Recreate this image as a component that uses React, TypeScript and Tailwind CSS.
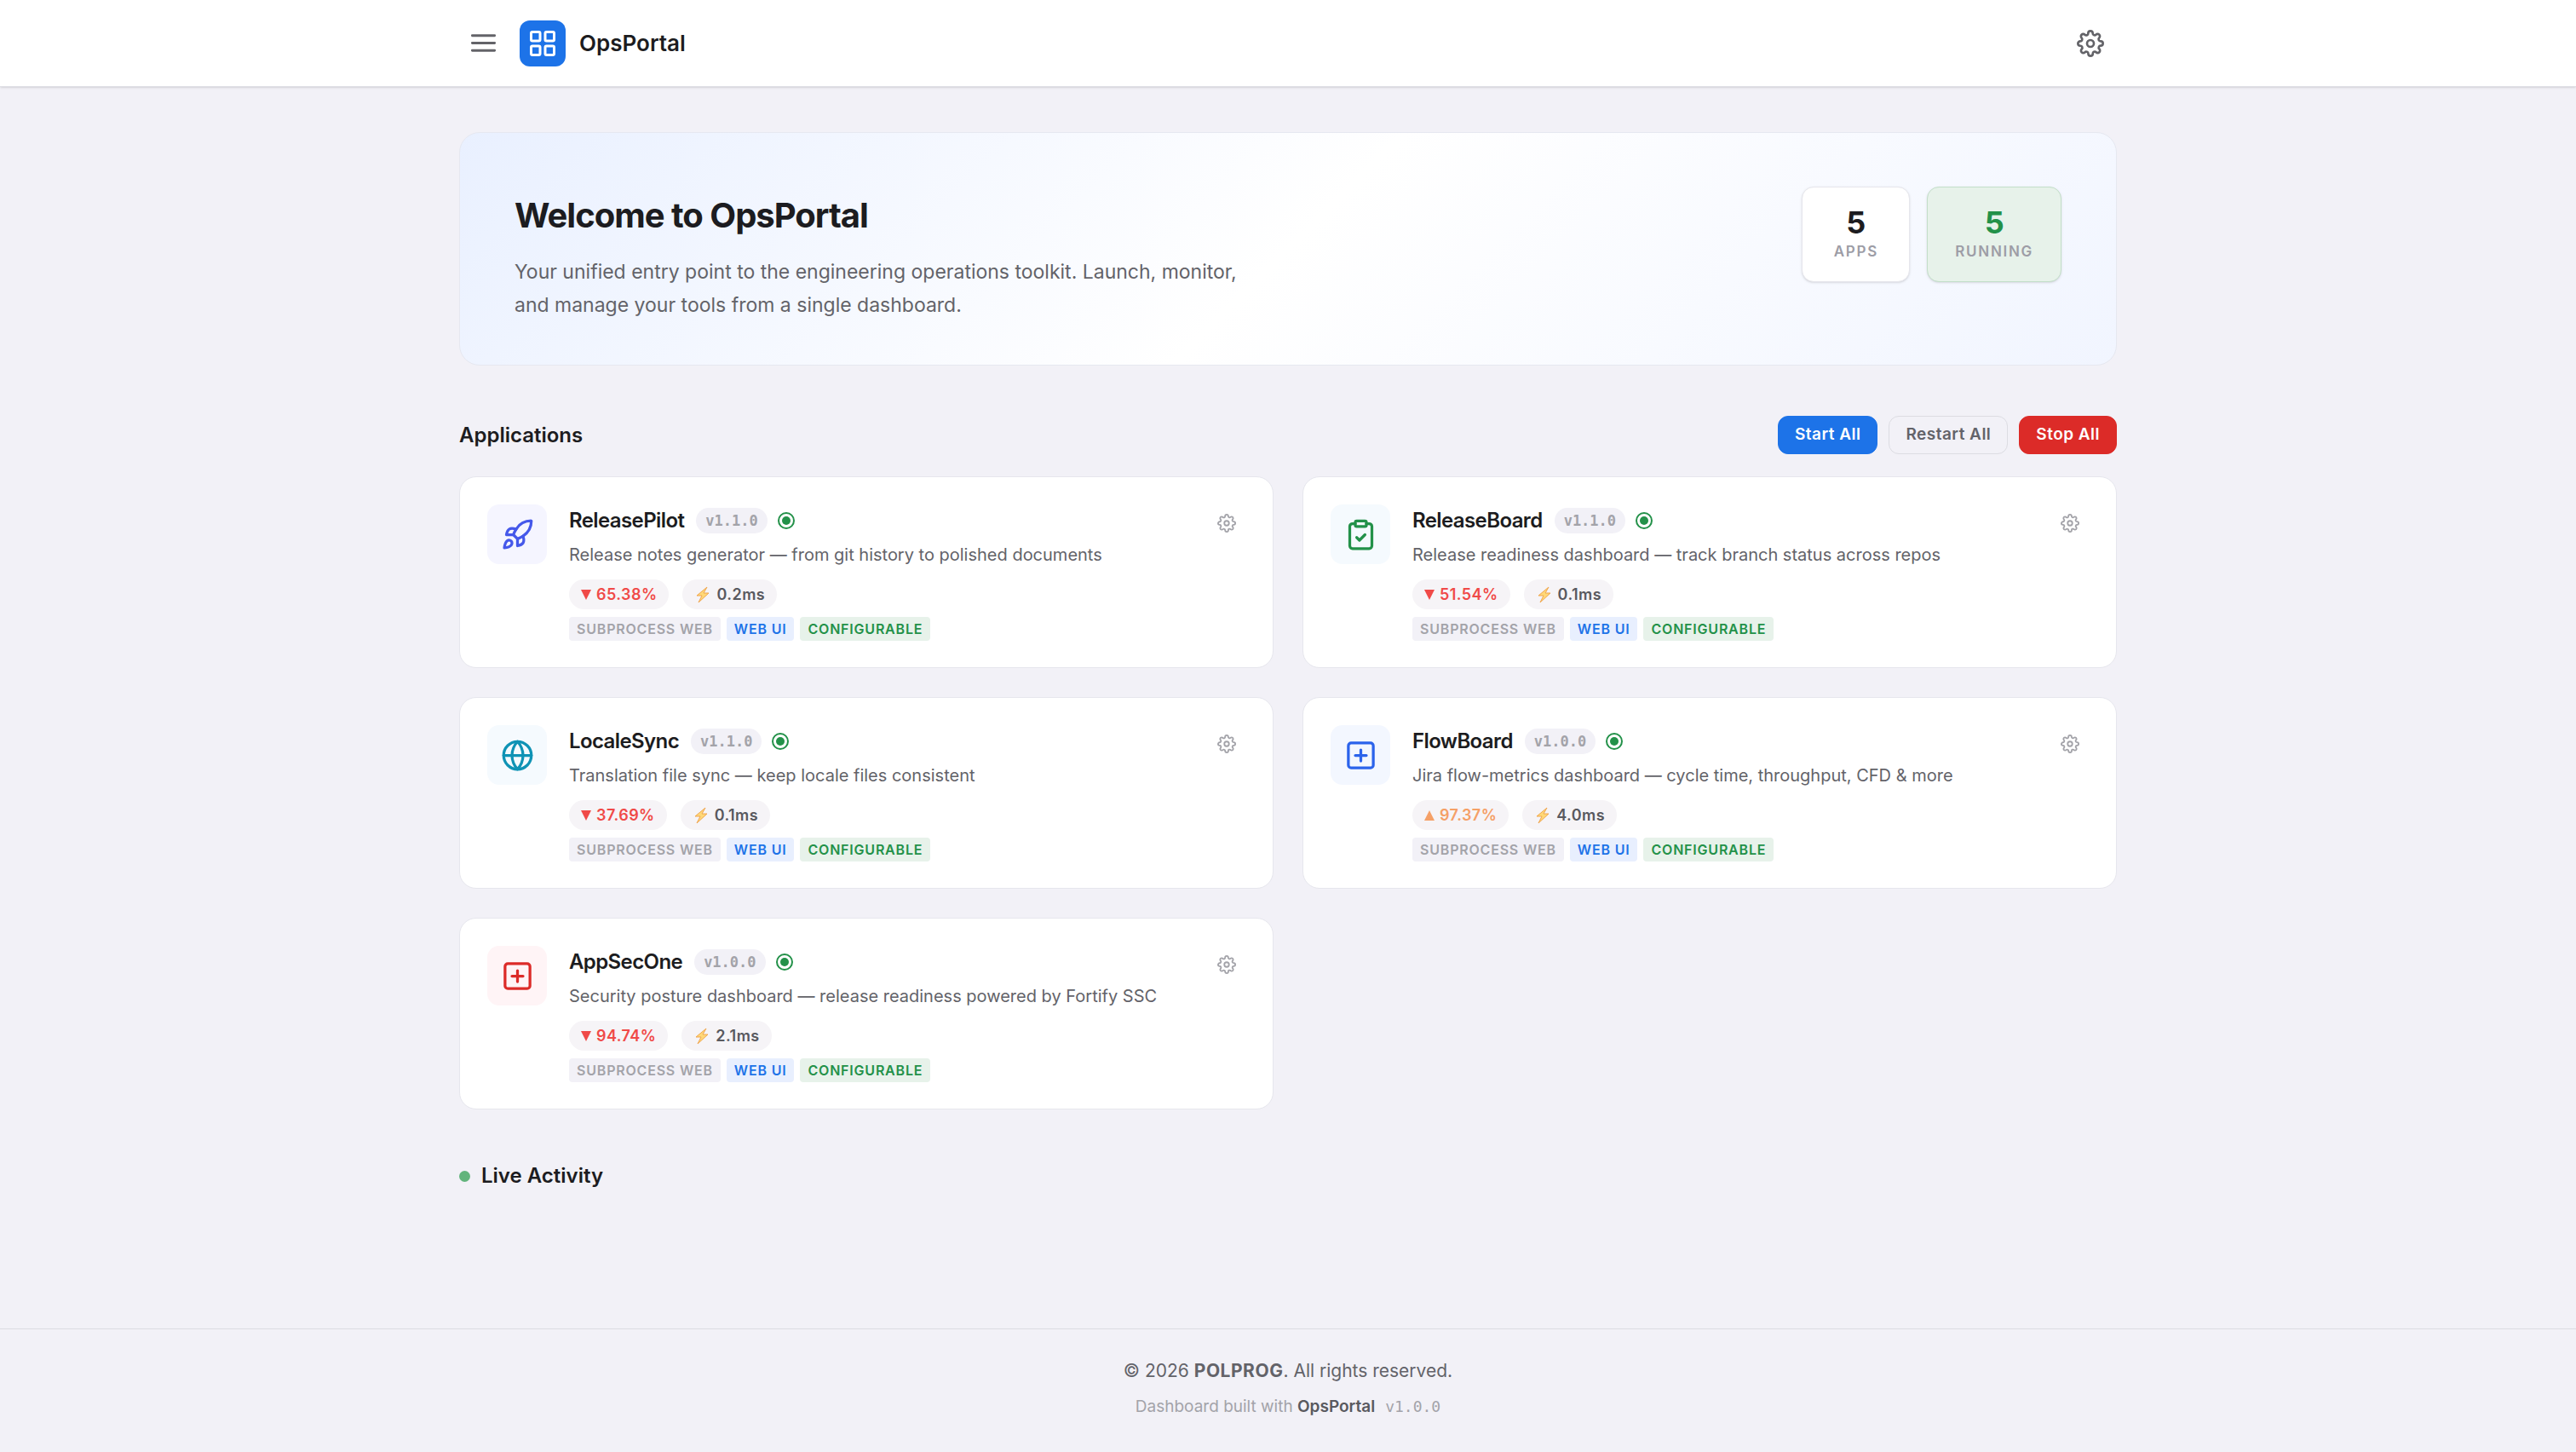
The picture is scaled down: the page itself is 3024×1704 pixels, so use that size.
import clsx from "clsx";
import type { ReactNode } from "react";

type AppInfo = {
  name: string;
  version: string;
  description: string;
  uptime: string;
  trend: "up" | "down";
  latency: string;
  icon: ReactNode;
  tile: string;
};

const plusSquare = (
  <>
    <rect x="3" y="3" width="18" height="18" rx="2" />
    <path d="M12 8v8M8 12h8" />
  </>
);

const apps: AppInfo[] = [
  {
    name: "ReleasePilot",
    version: "v1.1.0",
    description: "Release notes generator — from git history to polished documents",
    uptime: "65.38%",
    trend: "down",
    latency: "0.2ms",
    tile: "bg-[#f5f5ff] text-[#4558ea]",
    icon: (
      <>
        <path d="M4.5 16.5c-1.5 1.26-2 5-2 5s3.74-.5 5-2c.71-.84.7-2.13-.09-2.91a2.18 2.18 0 0 0-2.91-.09z" />
        <path d="m12 15-3-3a22 22 0 0 1 2-3.95A12.88 12.88 0 0 1 22 2c0 2.72-.78 7.5-6 11a22.35 22.35 0 0 1-4 2z" />
        <path d="M9 12H4s.55-3.03 2-4c1.62-1.08 5 0 5 0" />
        <path d="M12 15v5s3.03-.55 4-2c1.08-1.62 0-5 0-5" />
      </>
    ),
  },
  {
    name: "ReleaseBoard",
    version: "v1.1.0",
    description: "Release readiness dashboard — track branch status across repos",
    uptime: "51.54%",
    trend: "down",
    latency: "0.1ms",
    tile: "bg-[#f5fafe] text-[#239149]",
    icon: (
      <>
        <path d="M16 4h2a2 2 0 0 1 2 2v14a2 2 0 0 1-2 2H6a2 2 0 0 1-2-2V6a2 2 0 0 1 2-2h2" />
        <rect x="8" y="2" width="8" height="4" rx="1" />
        <path d="m9 14 2 2 4-4" />
      </>
    ),
  },
  {
    name: "LocaleSync",
    version: "v1.1.0",
    description: "Translation file sync — keep locale files consistent",
    uptime: "37.69%",
    trend: "down",
    latency: "0.1ms",
    tile: "bg-[#f5fafe] text-[#0f93b5]",
    icon: (
      <>
        <circle cx="12" cy="12" r="10" />
        <path d="M2 12h20" />
        <path d="M12 2a15.3 15.3 0 0 1 4 10 15.3 15.3 0 0 1-4 10 15.3 15.3 0 0 1-4-10 15.3 15.3 0 0 1 4-10z" />
      </>
    ),
  },
  {
    name: "FlowBoard",
    version: "v1.0.0",
    description: "Jira flow-metrics dashboard — cycle time, throughput, CFD & more",
    uptime: "97.37%",
    trend: "up",
    latency: "4.0ms",
    tile: "bg-[#f3f7ff] text-[#2b63eb]",
    icon: plusSquare,
  },
  {
    name: "AppSecOne",
    version: "v1.0.0",
    description: "Security posture dashboard — release readiness powered by Fortify SSC",
    uptime: "94.74%",
    trend: "down",
    latency: "2.1ms",
    tile: "bg-[#fff4f6] text-[#dc2b28]",
    icon: plusSquare,
  },
];

const Icon = ({ className, children }: { className: string; children: ReactNode }) => (
  <svg
    viewBox="0 0 24 24"
    fill="none"
    stroke="currentColor"
    strokeWidth="2"
    strokeLinecap="round"
    strokeLinejoin="round"
    className={className}
    aria-hidden="true"
  >
    {children}
  </svg>
);

const GearIcon = ({ className }: { className: string }) => (
  <Icon className={className}>
    <circle cx="12" cy="12" r="3" />
    <path d="M19.4 15a1.65 1.65 0 0 0 .33 1.82l.06.06a2 2 0 0 1 0 2.83 2 2 0 0 1-2.83 0l-.06-.06a1.65 1.65 0 0 0-1.82-.33 1.65 1.65 0 0 0-1 1.51V21a2 2 0 0 1-2 2 2 2 0 0 1-2-2v-.09A1.65 1.65 0 0 0 9 19.4a1.65 1.65 0 0 0-1.82.33l-.06.06a2 2 0 0 1-2.83 0 2 2 0 0 1 0-2.83l.06-.06a1.65 1.65 0 0 0 .33-1.82 1.65 1.65 0 0 0-1.51-1H3a2 2 0 0 1-2-2 2 2 0 0 1 2-2h.09A1.65 1.65 0 0 0 4.6 9a1.65 1.65 0 0 0-.33-1.82l-.06-.06a2 2 0 0 1 0-2.83 2 2 0 0 1 2.83 0l.06.06a1.65 1.65 0 0 0 1.82.33H9a1.65 1.65 0 0 0 1-1.51V3a2 2 0 0 1 2-2 2 2 0 0 1 2 2v.09a1.65 1.65 0 0 0 1 1.51 1.65 1.65 0 0 0 1.82-.33l.06-.06a2 2 0 0 1 2.83 0 2 2 0 0 1 0 2.83l-.06.06a1.65 1.65 0 0 0-.33 1.82V9a1.65 1.65 0 0 0 1.51 1H21a2 2 0 0 1 2 2 2 2 0 0 1-2 2h-.09a1.65 1.65 0 0 0-1.51 1z" />
  </Icon>
);

const Header = () => (
  <header className="border-b border-[#e0e0e6] bg-white shadow-sm">
    <div className="mx-auto flex h-[101px] max-w-[1946px] items-center justify-between">
      <div className="flex items-center">
        <button aria-label="Menu" className="px-[11px] text-[#636368]">
          <Icon className="size-[35px]">
            <path d="M3 6h18M3 12h18M3 18h18" />
          </Icon>
        </button>
        <div className="ml-[14px] flex size-[54px] items-center justify-center rounded-xl bg-[#1d73e8] text-white">
          <Icon className="size-9">
            <rect x="3" y="3" width="7" height="7" rx="1" />
            <rect x="14" y="3" width="7" height="7" rx="1" />
            <rect x="3" y="14" width="7" height="7" rx="1" />
            <rect x="14" y="14" width="7" height="7" rx="1" />
          </Icon>
        </div>
        <span className="ml-4 text-[26px] font-semibold">OpsPortal</span>
      </div>
      <button aria-label="Settings" className="px-[15px] text-[#636368]">
        <GearIcon className="size-8" />
      </button>
    </div>
  </header>
);

const Stat = ({ value, label, running }: { value: number; label: string; running?: boolean }) => (
  <div
    className={clsx(
      "flex h-[112px] min-w-[127px] flex-col items-center justify-center rounded-[14px] border px-8 shadow-sm",
      running ? "border-[#c3dfc9] bg-[#e7f2ea]" : "border-[#e6e6ec] bg-white",
    )}
  >
    <span className={clsx("text-4xl font-bold", running ? "text-[#239149]" : "text-[#1c1c20]")}>{value}</span>
    <span className="text-[17px] leading-7 font-semibold tracking-widest text-[#9d9da6]">{label}</span>
  </div>
);

const Hero = () => (
  <section className="flex items-start justify-between rounded-3xl border border-[#e6e8f0] bg-linear-135 from-[#e9f0ff] via-white to-[#f1f5ff] px-16 pt-[63px] pb-[50px]">
    <div className="max-w-[880px]">
      <h1 className="pt-2 text-[40px] leading-[52px] font-bold tracking-tight">Welcome to OpsPortal</h1>
      <p className="mt-[21px] text-[23px] leading-[39px] text-[#636369]">
        Your unified entry point to the engineering operations toolkit. Launch, monitor, and manage your tools from a
        single dashboard.
      </p>
    </div>
    <div className="flex gap-5">
      <Stat value={5} label="APPS" />
      <Stat value={5} label="RUNNING" running />
    </div>
  </section>
);

const AppCard = ({ app }: { app: AppInfo }) => (
  <article className="flex items-start rounded-[20px] border border-[#e6e6ed] bg-white px-8 pt-8 pb-[31px]">
    <div className={clsx("flex size-[70px] shrink-0 items-center justify-center rounded-[14px]", app.tile)}>
      <Icon className="size-[39px]">{app.icon}</Icon>
    </div>
    <div className="ml-[26px] flex-1">
      <div className="flex h-[38px] items-center">
        <h3 className="text-2xl font-semibold tracking-tight">{app.name}</h3>
        <span className="ml-[14px] rounded-full bg-[#f2f1f7] px-[11px] font-['DejaVu_Sans_Mono',monospace] text-[17px] leading-[30px] font-bold text-[#a3a3a9]">
          {app.version}
        </span>
        <span className="ml-3 flex size-5 items-center justify-center rounded-full border-2 border-[#239149]">
          <span className="size-[10px] rounded-full bg-[#239149]" />
        </span>
      </div>
      <p className="mt-1 text-xl leading-[34px] text-[#636369]">{app.description}</p>
      <div className="mt-3 flex gap-4 text-lg leading-[35px] font-semibold tracking-wide">
        <span
          className={clsx(
            "flex items-center gap-[6px] rounded-full bg-[#f6f4f7] px-[14px]",
            app.trend === "up" ? "text-[#f5a067]" : "text-[#f04a48]",
          )}
        >
          <svg viewBox="0 0 12 12" className="size-3" fill="currentColor" aria-hidden="true">
            <path d={app.trend === "up" ? "M6 0l6 12H0z" : "M0 0h12L6 12z"} />
          </svg>
          {app.uptime}
        </span>
        <span className="flex items-center gap-2 rounded-full bg-[#f6f4f7] pr-[14px] pl-4 text-[#59595f]">
          <svg viewBox="0 0 16 20" className="h-5 w-4" fill="#ffd877" stroke="#f0a64f" strokeWidth="1" aria-hidden="true">
            <path d="M13 1 1 11h6L3 19 15 8H9z" strokeLinejoin="round" />
          </svg>
          {app.latency}
        </span>
      </div>
      <div className="mt-[9px] flex gap-[7px] text-base leading-7 font-semibold tracking-wider">
        <span className="rounded-sm bg-[#f2f1f7] px-[9px] text-[#a3a3a9]">SUBPROCESS WEB</span>
        <span className="rounded-sm bg-[#e8effe] px-[9px] text-[#1d73e8]">WEB UI</span>
        <span className="rounded-sm bg-[#e7f2ea] px-[9px] text-[#239149]">CONFIGURABLE</span>
      </div>
    </div>
    <button aria-label={`${app.name} settings`} className="p-[11px] text-[#a3a3a9]">
      <GearIcon className="size-[22px]" />
    </button>
  </article>
);

const buttonBase = "h-[45px] rounded-xl border px-[19px] text-[19px] font-semibold tracking-wide";

export default function App() {
  return (
    <div className="flex min-h-screen flex-col bg-[#f2f1f7] font-[Inter,sans-serif] text-[#1c1c20]">
      <Header />
      <main className="mx-auto w-full max-w-[1946px] flex-1 pt-[53px]">
        <Hero />
        <div className="mt-[59px] flex items-center justify-between">
          <h2 className="text-2xl font-semibold">Applications</h2>
          <div className="flex gap-[13px]">
            <button className={clsx(buttonBase, "border-[#1d73e8] bg-[#1d73e8] text-white")}>Start All</button>
            <button className={clsx(buttonBase, "border-[#dcdce2] text-[#636369]")}>Restart All</button>
            <button className={clsx(buttonBase, "border-[#dc2b28] bg-[#dc2b28] text-white")}>Stop All</button>
          </div>
        </div>
        <div className="mt-[26px] grid grid-cols-2 gap-[34px]">
          {apps.map((app) => (
            <AppCard key={app.name} app={app} />
          ))}
        </div>
        <div className="mt-[62px] flex items-center gap-[13px]">
          <span className="size-[13px] rounded-full bg-[#62b47c]" />
          <h2 className="text-2xl font-semibold">Live Activity</h2>
        </div>
      </main>
      <footer className="border-t border-[#dcdce2] pt-8 pb-9 text-center">
        <p className="text-[21px] leading-[34px] text-[#636369]">
          © 2026 <strong className="tracking-wide">POLPROG</strong>. All rights reserved.
        </p>
        <p className="mt-2 text-[19px] leading-[34px] text-[#a3a3a9]">
          Dashboard built with <strong className="font-semibold text-[#59595f]">OpsPortal</strong>
          <span className="ml-3 font-['DejaVu_Sans_Mono',monospace] text-lg">v1.0.0</span>
        </p>
      </footer>
    </div>
  );
}
